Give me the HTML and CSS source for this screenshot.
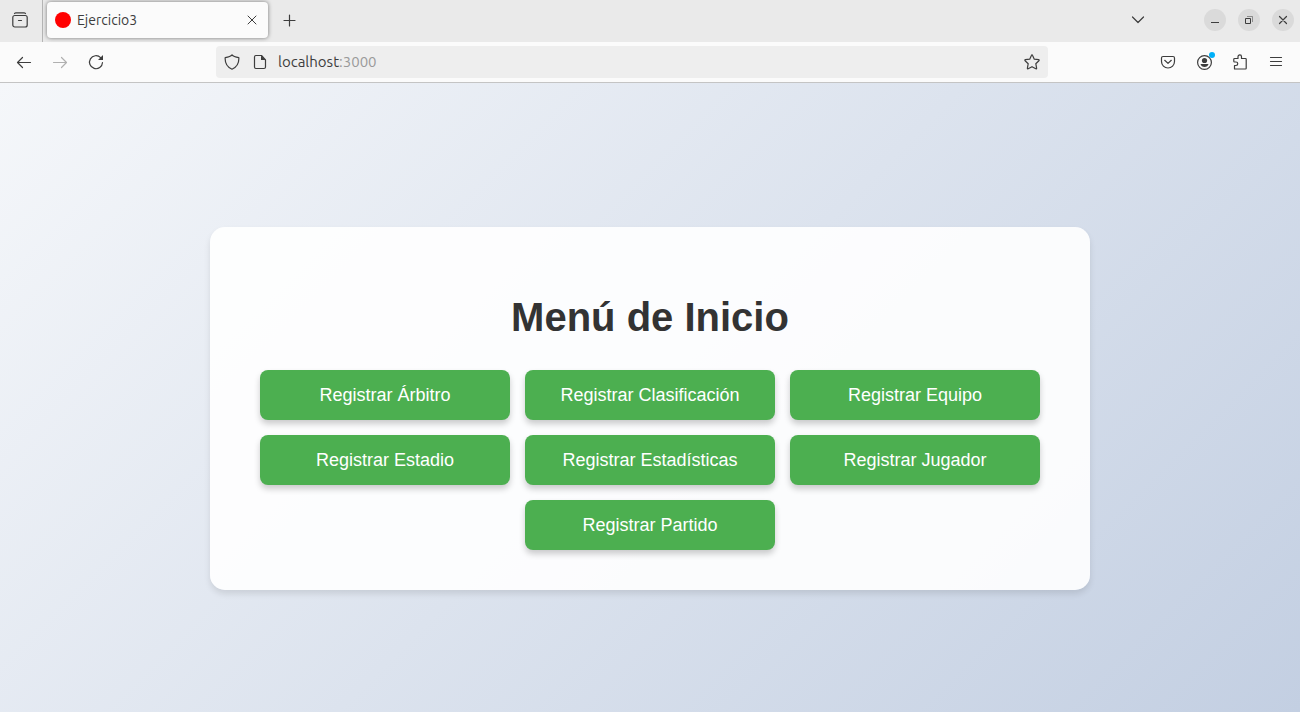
FILE: index.html
```html
<!DOCTYPE html>
<html lang="es">
<head>
<meta charset="utf-8">
<meta name="viewport" content="width=device-width, initial-scale=1">
<title>Ejercicio3</title>
<link rel="stylesheet" href="styles.css">
</head>
<body>
<header class="browser">
  <div class="tabbar">
    <button class="recent" aria-label="Vista de Firefox">
      <svg class="icon" viewBox="0 0 16 16"><path d="M2.500 1.500Q3 .8 4 .8h8q1 0 1.500.7"/><rect x=".8" y="3.500" width="14.400" height="11.500" rx="2"/><path d="M6.500 8.500h3"/></svg>
    </button>
    <div class="tab">
      <span class="favicon"></span>
      <span class="tab-title">Ejercicio3</span>
      <button class="tab-close" aria-label="Cerrar pestaña">
        <svg class="icon thin" viewBox="0 0 16 16"><path d="M4 4l8 8M12 4l-8 8"/></svg>
      </button>
    </div>
    <button class="tool new-tab" aria-label="Nueva pestaña">
      <svg class="icon" viewBox="0 0 16 16"><path d="M8.500 3v11M3 8.500h11"/></svg>
    </button>
    <button class="tool list-tabs" aria-label="Listar pestañas">
      <svg class="icon" viewBox="0 0 16 16"><path d="M2.500 5L8 10.500 13.500 5"/></svg>
    </button>
    <div class="window-controls">
      <button class="win" aria-label="Minimizar"><svg class="icon square" viewBox="0 0 16 16"><path d="M4 10.500h8"/></svg></button>
      <button class="win" aria-label="Restaurar"><svg class="icon square" viewBox="0 0 16 16"><path class="faint" d="M6 4.500h5.500V10"/><path d="M4.500 6.500h5v5h-5z"/></svg></button>
      <button class="win" aria-label="Cerrar"><svg class="icon" viewBox="0 0 16 16"><path d="M4.500 4.500l7 7M11.500 4.500l-7 7"/></svg></button>
    </div>
  </div>
  <div class="toolbar">
    <nav class="nav-buttons" aria-label="Navegación">
      <button class="tool" aria-label="Atrás"><svg class="icon" viewBox="0 0 16 16"><path d="M14.500 8.500h-13M6.500 3.500l-5 5 5 5"/></svg></button>
      <button class="tool" aria-label="Adelante" disabled><svg class="icon" viewBox="0 0 16 16"><path d="M1.500 8.500h13M9.500 3.500l5 5-5 5"/></svg></button>
      <button class="tool" aria-label="Recargar"><svg class="icon" viewBox="0 0 16 16"><path d="M14.500 8.500A6.500 6.500 0 1 1 12.600 3.600"/><path class="solid" d="M15 1V6H10z"/></svg></button>
    </nav>
    <div class="urlbar">
      <svg class="icon" viewBox="0 0 16 16"><path d="M8 .8Q9.500 2.700 14.800 3.600C15.200 9.500 12 13.600 8 15.200 4 13.600.8 9.500 1.200 3.600Q6.500 2.700 8 .8z"/></svg>
      <svg class="icon" viewBox="0 0 16 16"><path d="M9.500 1.500H4q-1.500 0-1.500 1.500v10q0 1.500 1.500 1.500h8q1.500 0 1.500-1.500V6z"/><path class="solid" d="M9 1.500V6h4.500z"/></svg>
      <span class="address" role="textbox" aria-label="Dirección">localhost<span class="port">:3000</span></span>
      <button class="bookmark" aria-label="Añadir marcador"><svg class="icon" viewBox="0 0 16 16"><path d="M8 .9q.4 0 .6.500l1.700 3.800 4.300.5q1 .2.300 1l-3.100 3 .8 4.500q.1 1-.8.600L8 12.700l-3.800 2.100q-.9.400-.8-.6l.8-4.500-3.100-3q-.7-.8.300-1l4.300-.5 1.700-3.800q.2-.5.600-.5z"/></svg></button>
    </div>
    <div class="actions">
      <button class="tool" aria-label="Pocket"><svg class="icon" viewBox="0 0 16 16"><path d="M3 2.500h10q1.500 0 1.500 1.500v3.500a6.500 6.500 0 0 1-13 0V4q0-1.500 1.500-1.500z"/><path d="M4.700 6.300L8 9.400l3.300-3.100"/></svg></button>
      <button class="tool account" aria-label="Cuenta"><svg class="icon" viewBox="0 0 16 16"><circle cx="8.500" cy="8.500" r="6.900"/><circle class="solid" cx="8.500" cy="6.500" r="2.600"/><path class="solid" d="M4.500 10h8q-.8 3-4 3t-4-3z"/></svg></button>
      <button class="tool" aria-label="Extensiones"><svg class="icon" viewBox="0 0 16 16"><path d="M2.500 15V11.500H4a1.700 1.700 0 0 0 0-3.500H2.500q-.7 0-.7-.7V5.200q0-.7.700-.7H6V2.700a1.700 1.700 0 0 1 3.500 0V4.500h4q.7 0 .7.700V14.300q0 .7-.7.700z"/></svg></button>
      <button class="tool" aria-label="Menú"><svg class="icon" viewBox="0 0 16 16"><path d="M2.500 3.500h11M2.500 7.500h11M2.500 11.500h11"/></svg></button>
    </div>
  </div>
</header>
<main class="page">
  <section class="card">
    <h1 class="title">Menú de Inicio</h1>
    <div class="menu">
      <button class="option">Registrar Árbitro</button>
      <button class="option">Registrar Clasificación</button>
      <button class="option">Registrar Equipo</button>
      <button class="option">Registrar Estadio</button>
      <button class="option">Registrar Estadísticas</button>
      <button class="option">Registrar Jugador</button>
      <button class="option">Registrar Partido</button>
    </div>
  </section>
</main>
</body>
</html>
```
FILE: styles.css
```css
* {
  box-sizing: border-box;
}

body {
  margin: 0;
  min-height: 100vh;
  display: flex;
  flex-direction: column;
  font-family: "Liberation Sans", Arial, sans-serif;
}

button {
  padding: 0;
  border: 0;
  background: none;
  color: inherit;
  font: inherit;
}

.browser {
  color: #3d3d3d;
  font-family: Ubuntu, "Noto Sans", sans-serif;
  font-size: 14px;
}

.icon {
  display: block;
  flex: none;
  width: 16px;
  height: 16px;
  fill: none;
  stroke: currentColor;
  stroke-width: 1.2;
  stroke-linecap: round;
  stroke-linejoin: round;
}

.thin {
  stroke-width: 1;
}

.square {
  stroke-width: 1;
  stroke-linecap: butt;
  stroke-linejoin: miter;
}

.solid {
  fill: currentColor;
  stroke: none;
}

.faint {
  opacity: 0.5;
}

.tabbar {
  display: flex;
  align-items: center;
  height: 42px;
  padding: 0 6px 2px 0;
  background: #eaeaea;
}

.recent {
  display: flex;
  align-items: center;
  justify-content: center;
  align-self: flex-start;
  width: 43px;
  height: 42px;
  margin-right: 4px;
  padding: 0 2px 2px 0;
  border-right: 1px solid #b5b5b5;
}

.tab {
  display: flex;
  align-items: center;
  gap: 6px;
  width: 221px;
  height: 36px;
  padding: 0 8px;
  border-radius: 4px;
  background: #fbfbfb;
  box-shadow: 0 0 4px rgba(0, 0, 0, 0.5);
}

.favicon {
  width: 16px;
  height: 16px;
  border-radius: 50%;
  background: #f00;
}

.tab-title {
  flex: 1;
}

.tool {
  display: flex;
  align-items: center;
  justify-content: center;
  width: 36px;
  height: 36px;
}

.tool:disabled {
  color: #b0b0b0;
}

.new-tab {
  margin-left: 3px;
}

.list-tabs {
  margin-left: auto;
  margin-right: 48px;
}

.window-controls {
  display: flex;
  gap: 12px;
}

.win {
  display: flex;
  align-items: center;
  justify-content: center;
  width: 22px;
  height: 22px;
  border-radius: 50%;
  background: #dadada;
}

.toolbar {
  display: flex;
  align-items: center;
  height: 41px;
  border-bottom: 1px solid #c4c4c4;
  background: #fbfbfb;
}

.nav-buttons {
  display: flex;
  width: 216px;
  padding-left: 6px;
}

.urlbar {
  display: flex;
  align-items: center;
  flex: 1;
  gap: 12px;
  height: 32px;
  padding: 0 8px;
  border-radius: 4px;
  background: #eee;
}

.address {
  flex: 1;
  margin-left: -2px;
  padding-bottom: 2px;
  font-size: 15px;
}

.port {
  color: #9a9a9a;
}

.actions {
  display: flex;
  justify-content: flex-end;
  width: 252px;
  padding-right: 6px;
}

.account {
  position: relative;
}

.account::after {
  content: "";
  position: absolute;
  top: 8px;
  right: 7px;
  width: 6px;
  height: 6px;
  border-radius: 50%;
  background: #00b0f8;
}

.page {
  flex: 1;
  display: flex;
  align-items: center;
  justify-content: center;
  padding: 22px 20px 0;
  background: linear-gradient(135deg, #f5f7fa, #c3cfe2);
}

.card {
  width: 100%;
  max-width: 880px;
  padding: 40px;
  border-radius: 15px;
  background: rgba(255, 255, 255, 0.9);
  box-shadow: 0 4px 6px rgba(0, 0, 0, 0.1);
  text-align: center;
}

.title {
  margin: 27px 0 30px;
  color: #333;
  font-size: 40px;
  line-height: 46px;
}

.menu {
  display: flex;
  flex-wrap: wrap;
  justify-content: center;
  gap: 15px;
}

.option {
  width: 250px;
  height: 50px;
  border-radius: 8px;
  background: #4caf50;
  box-shadow: 0 4px 6px rgba(0, 0, 0, 0.2);
  color: #fff;
  font-size: 18px;
}
```
